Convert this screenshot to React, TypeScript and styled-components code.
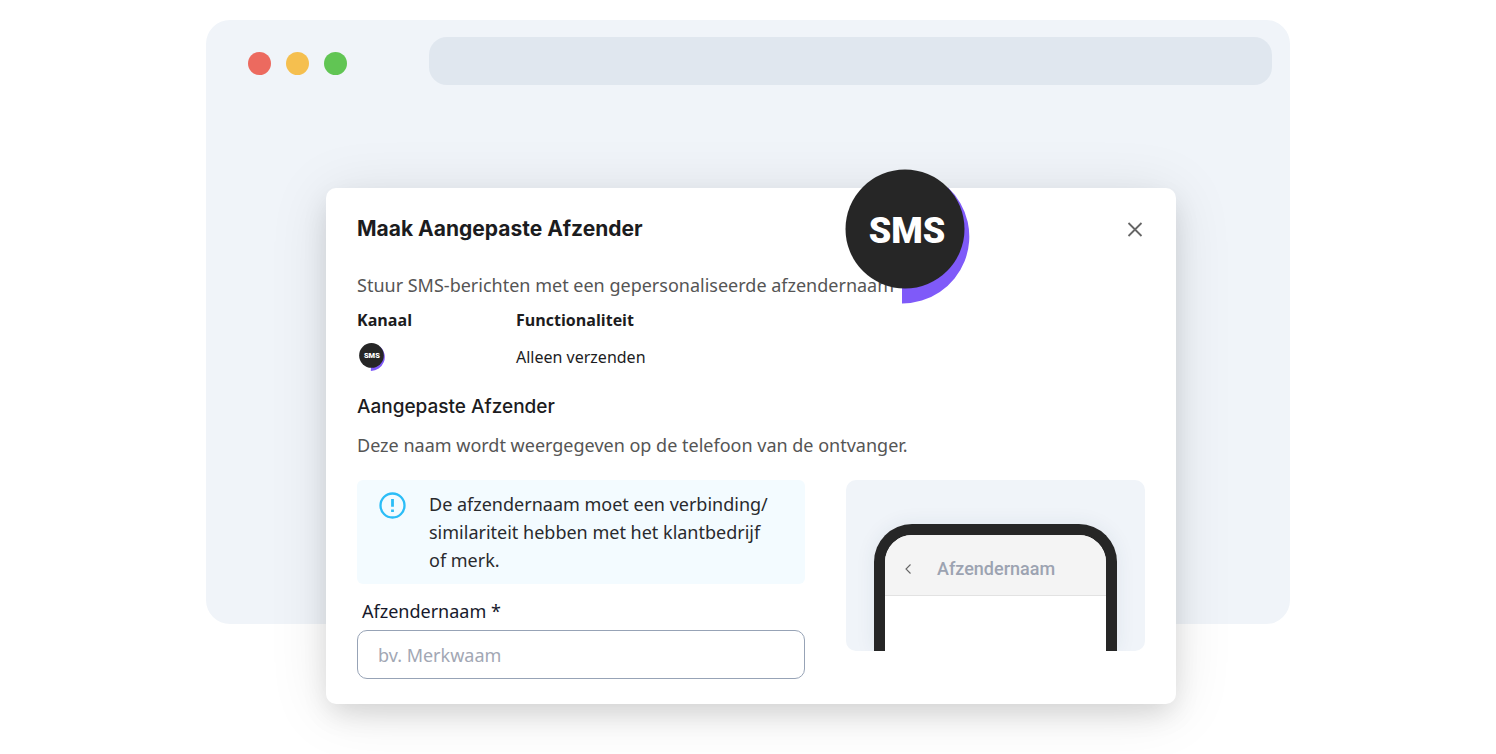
import React from "react";
import styled, { createGlobalStyle } from "styled-components";

const bodyFont = `"Noto Sans", "Open Sans", sans-serif`;
const headingFont = `Inter, "Liberation Sans", sans-serif`;

const GlobalStyle = createGlobalStyle`
  *, *::before, *::after { box-sizing: border-box; }
  body { margin: 0; background: #fff; font-family: ${bodyFont}; color: #1c1c1e; }
  h1, h2, p, dl, dt, dd { margin: 0; }
`;

const Page = styled.main`
  padding: 20px 20px 130px;
`;

const BrowserWindow = styled.section`
  display: flex;
  flex-direction: column;
  width: 100%;
  max-width: 1084px;
  margin: 0 auto;
  border-radius: 24px;
  background: #f0f4f9;
`;

const BrowserBar = styled.header`
  display: flex;
  align-items: center;
  gap: 82px;
  padding: 17px 18px 0 42px;
`;

const Dots = styled.div`
  display: flex;
  gap: 15px;
  padding-top: 5px;
`;

const Dot = styled.span<{ $color: string }>`
  width: 23px;
  height: 23px;
  border-radius: 50%;
  background: ${(p) => p.$color};
`;

const AddressBar = styled.div`
  flex: 1;
  height: 48px;
  border-radius: 18px;
  background: #e0e7ef;
`;

const Dialog = styled.section`
  position: relative;
  margin: 103px 114px -80px 120px;
  padding: 24px 31px 25px;
  border-radius: 10px;
  background: #fff;
  box-shadow: 0 12px 28px -4px rgba(0, 0, 0, 0.13), 0 6px 60px rgba(0, 0, 0, 0.1);
`;

const DialogHeader = styled.div`
  display: flex;
  align-items: center;
  justify-content: space-between;
  height: 34px;
`;

const Title = styled.h1`
  font: 700 21px/34px ${headingFont};
`;

const CloseButton = styled.button`
  display: flex;
  padding: 2px;
  border: 0;
  background: none;
  color: #666;
  cursor: pointer;
`;

const Text = styled.p`
  font-size: 18px;
  line-height: 28px;
  color: #555;
`;

const Intro = styled(Text)`
  margin-top: 25px;
`;

const Details = styled.dl`
  display: flex;
  gap: 20px;
  margin-top: 9px;
  font-size: 16px;
  line-height: 24px;
`;

const Detail = styled.div<{ $width: number }>`
  width: ${(p) => p.$width}px;
`;

const Term = styled.dt`
  font-family: "Open Sans", "Noto Sans", sans-serif;
  font-weight: 700;
`;

const Value = styled.dd`
  display: flex;
  align-items: center;
  height: 28px;
  margin-top: 11px;
`;

const SectionTitle = styled.h2`
  margin-top: 22px;
  font: 500 19px/28px ${headingFont};
`;

const SectionText = styled(Text)`
  margin-top: 10px;
`;

const Columns = styled.div`
  display: grid;
  grid-template-columns: minmax(0, 448fr) minmax(0, 299fr);
  align-items: start;
  gap: 41px;
  margin-top: 21px;
`;

const Notice = styled.div`
  display: flex;
  gap: 22px;
  padding: 10px 20px;
  border-radius: 6px;
  background: #f3fbff;
`;

const NoticeIcon = styled.svg`
  flex: none;
  margin-top: 1px;
`;

const NoticeText = styled(Text)`
  color: #292a2d;
`;

const Label = styled.label`
  display: block;
  margin-top: 12px;
  padding-left: 5px;
  font-size: 18px;
  line-height: 30px;
  color: #17192b;
`;

const Input = styled.input`
  display: block;
  width: 100%;
  height: 49px;
  margin-top: 4px;
  padding: 0 20px;
  border: 1px solid #97a3b6;
  border-radius: 10px;
  background: #fff;
  font: 18px/28px ${bodyFont};
  color: #17192b;
  &::placeholder { color: #a2a7b4; opacity: 1; }
`;

const Preview = styled.div`
  padding: 44px 28px 0;
  border-radius: 10px;
  background: #f0f4f9;
`;

const Phone = styled.div`
  height: 127px;
  border: 11px solid #262626;
  border-bottom: 0;
  border-radius: 38px 38px 0 0;
  background: #fff;
  overflow: hidden;
  box-shadow: 0 0 20px rgba(40, 60, 90, 0.08);
  clip-path: inset(-30px -28px 0);
`;

const PhoneHeader = styled.div`
  display: flex;
  align-items: center;
  gap: 22px;
  height: 61px;
  padding: 8px 16px 0;
  border-bottom: 1px solid #e2e2e2;
  background: #f4f4f4;
  font: 500 18px/24px Roboto, sans-serif;
  color: #9ca3b1;
`;

const BadgeHolder = styled.div`
  position: absolute;
  top: -19px;
  left: 519px;
`;

const SmsText = styled.text`
  font: 900 36px Roboto, sans-serif;
`;

const Block = styled.svg`
  display: block;
`;

function SmsBadge({ width, height }: { width: number; height: number }) {
  return (
    <Block width={width} height={height} viewBox="0 0 125 135" role="img" aria-label="SMS">
      <path d="M57 67.500V134.500A67 67 0 0 0 103 18.500Z" fill="#7f5af9" />
      <circle cx="60" cy="60" r="59.500" fill="#262626" />
      <SmsText x="62" y="74" textAnchor="middle" fill="#fff">SMS</SmsText>
    </Block>
  );
}

export default function App() {
  return (
    <>
      <GlobalStyle />
      <Page>
        <BrowserWindow>
          <BrowserBar>
            <Dots>
              <Dot $color="#ec6a5f" />
              <Dot $color="#f5bf4f" />
              <Dot $color="#61c554" />
            </Dots>
            <AddressBar />
          </BrowserBar>
          <Dialog role="dialog" aria-labelledby="dialog-title">
            <DialogHeader>
              <Title id="dialog-title">Maak Aangepaste Afzender</Title>
              <CloseButton type="button" aria-label="Sluiten">
                <Block width="16" height="16" viewBox="0 0 16 16" fill="none" stroke="currentColor" strokeWidth="1.800">
                  <path d="M1.500 2 14.500 15M14.500 2 1.500 15" />
                </Block>
              </CloseButton>
            </DialogHeader>
            <Intro>Stuur SMS-berichten met een gepersonaliseerde afzendernaam</Intro>
            <Details>
              <Detail $width={139}>
                <Term>Kanaal</Term>
                <Value><SmsBadge width={30} height={28} /></Value>
              </Detail>
              <Detail $width={200}>
                <Term>Functionaliteit</Term>
                <Value>Alleen verzenden</Value>
              </Detail>
            </Details>
            <SectionTitle>Aangepaste Afzender</SectionTitle>
            <SectionText>Deze naam wordt weergegeven op de telefoon van de ontvanger.</SectionText>
            <Columns>
              <div>
                <Notice>
                  <NoticeIcon width="30" height="30" viewBox="0 0 30 30" fill="none" stroke="#2bbdf7">
                    <circle cx="15.500" cy="14.500" r="12" strokeWidth="2.300" />
                    <path d="M15.500 8v7.800M15.500 18.500v2.600" strokeWidth="2.800" />
                  </NoticeIcon>
                  <NoticeText>
                    De afzendernaam moet een verbinding/<br />
                    similariteit hebben met het klantbedrijf<br />
                    of merk.
                  </NoticeText>
                </Notice>
                <Label htmlFor="sender">Afzendernaam *</Label>
                <Input id="sender" type="text" placeholder="bv. Merkwaam" required />
              </div>
              <Preview>
                <Phone>
                  <PhoneHeader>
                    <Block width="14" height="14" viewBox="0 0 14 14" fill="none" stroke="#666" strokeWidth="1.100">
                      <path d="M9.500 2.500 5 7l4.500 4.500" />
                    </Block>
                    <span>Afzendernaam</span>
                  </PhoneHeader>
                </Phone>
              </Preview>
            </Columns>
            <BadgeHolder><SmsBadge width={125} height={135} /></BadgeHolder>
          </Dialog>
        </BrowserWindow>
      </Page>
    </>
  );
}
